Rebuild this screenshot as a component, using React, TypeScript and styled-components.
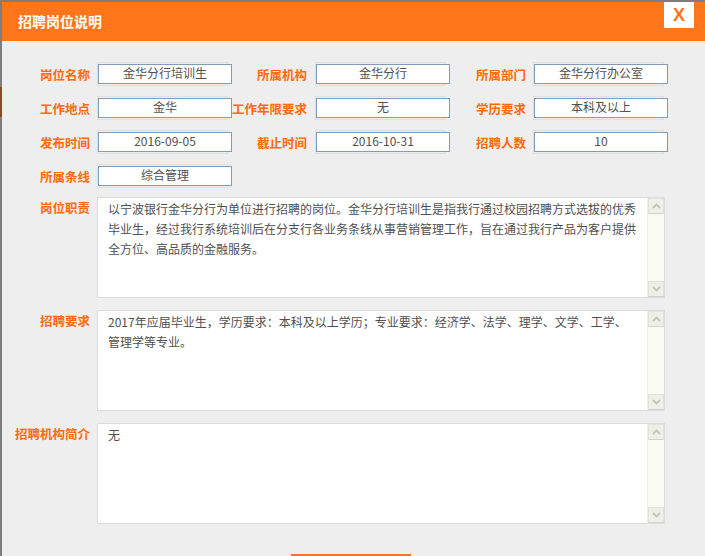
import React from 'react'
import styled, { createGlobalStyle } from 'styled-components'

const GlobalStyle = createGlobalStyle`
  html, body {
    margin: 0;
    padding: 0;
    width: 705px;
    height: 556px;
    overflow: hidden;
    background: linear-gradient(to bottom, #7d7d7d 0 87px, #8e4a1a 87px 117px, #7d7d7d 117px);
    font-family: "Noto Sans CJK SC", "Liberation Sans", sans-serif;
  }
`

const ORANGE = '#ff761a'
const LABEL = '#ff6a0a'

const Dialog = styled.div`
  margin: 2px 0 0 2px;
  width: 703px;
  height: 554px;
  background: #eeeeee;
  overflow: hidden;
  display: flex;
  flex-direction: column;
`

const Header = styled.div`
  height: 39px;
  flex-shrink: 0;
  background: ${ORANGE};
  display: flex;
  justify-content: space-between;
  align-items: flex-start;
`

const Title = styled.h1`
  margin: 0;
  padding-left: 16px;
  font-size: 14px;
  line-height: 38px;
  font-weight: 700;
  color: #ffffff;
`

const CloseBox = styled.button`
  width: 30px;
  height: 26px;
  margin-right: 11px;
  border: none;
  padding: 0;
  background: #ffffff;
  color: ${ORANGE};
  font-family: "Liberation Sans", sans-serif;
  font-size: 18px;
  font-weight: 700;
  line-height: 26px;
  cursor: pointer;
`

const Body = styled.div`
  padding-top: 16px;
  display: flex;
  flex-direction: column;
  flex-shrink: 0;
`

const FieldRow = styled.div`
  height: 34px;
  display: flex;
  align-items: center;
`

const Label = styled.div<{ $w: number; $pr?: number }>`
  width: ${(p) => p.$w}px;
  padding-right: ${(p) => p.$pr ?? 8}px;
  box-sizing: border-box;
  text-align: right;
  white-space: nowrap;
  font-size: 12.5px;
  font-weight: 700;
  color: ${LABEL};
`

const FieldCell = styled.div`
  position: relative;
  z-index: 0;
`

const FieldValue = styled.div`
  position: relative;
  width: 134px;
  height: 20px;
  box-sizing: border-box;
  border: 1px solid #7f9db9;
  background: #ffffff;
  text-align: center;
  font-size: 12px;
  line-height: 16px;
  color: #505050;

  &::before {
    content: '';
    position: absolute;
    left: -2px;
    top: -3px;
    width: 131px;
    height: 24px;
    box-sizing: border-box;
    border: 1px solid #e0e0e0;
    z-index: -1;
  }
`

const AreaList = styled.div`
  margin-top: 4px;
  display: flex;
  flex-direction: column;
  gap: 12px;
`

const AreaRow = styled.div`
  display: flex;
  align-items: flex-start;
`

const AreaLabel = styled(Label)`
  width: 95px;
  padding-right: 7px;
  padding-top: 1px;
`

const AreaBox = styled.div`
  width: 568px;
  height: 101px;
  box-sizing: border-box;
  border: 1px solid #dcdcdc;
  background: #ffffff;
  display: flex;
`

const AreaText = styled.div`
  flex: 1;
  padding: 1px 10px 0 10px;
  font-size: 12px;
  line-height: 20px;
  color: #505050;
`

const ScrollTrack = styled.div`
  width: 16px;
  background: #fbfbf4;
  border-left: 1px solid #f0f0ea;
  display: flex;
  flex-direction: column;
  justify-content: space-between;
`

const ScrollBtn = styled.div`
  height: 16px;
  box-sizing: border-box;
  border: 1px solid #e2e2da;
  border-bottom-color: #d2d2ca;
  background: #efefe8;
  display: flex;
  align-items: center;
  justify-content: center;
`

const Footer = styled.div`
  margin-top: 30px;
  display: flex;
  justify-content: center;
  padding-right: 5px;
`

// only the top edge of this button is inside the window
const SubmitButton = styled.div`
  width: 120px;
  height: 28px;
  background: ${ORANGE};
  cursor: pointer;
`

const Chevron = ({ up }: { up?: boolean }) => (
  <svg width="9" height="6" viewBox="0 0 9 6">
    <path
      d={up ? 'M1 5 L4.5 1.5 L8 5' : 'M1 1 L4.5 4.5 L8 1'}
      fill="none"
      stroke="#c4c4bc"
      strokeWidth="1.8"
    />
  </svg>
)

type Field = { label: string; value: string }

const rows: Field[][] = [
  [
    { label: '岗位名称', value: '金华分行培训生' },
    { label: '所属机构', value: '金华分行' },
    { label: '所属部门', value: '金华分行办公室' },
  ],
  [
    { label: '工作地点', value: '金华' },
    { label: '工作年限要求', value: '无' },
    { label: '学历要求', value: '本科及以上' },
  ],
  [
    { label: '发布时间', value: '2016-09-05' },
    { label: '截止时间', value: '2016-10-31' },
    { label: '招聘人数', value: '10' },
  ],
  [{ label: '所属条线', value: '综合管理' }],
]

// label cell widths per column (they include the gap before the input)
const labelCols = [
  { w: 96, pr: 8 },
  { w: 84, pr: 9 },
  { w: 84, pr: 8 },
]

const areas = [
  {
    label: '岗位职责',
    lines: [
      '以宁波银行金华分行为单位进行招聘的岗位。金华分行培训生是指我行通过校园招聘方式选拔的优秀',
      '毕业生，经过我行系统培训后在分支行各业务条线从事营销管理工作，旨在通过我行产品为客户提供',
      '全方位、高品质的金融服务。',
    ],
  },
  {
    label: '招聘要求',
    lines: [
      '2017年应届毕业生，学历要求：本科及以上学历；专业要求：经济学、法学、理学、文学、工学、',
      '管理学等专业。',
    ],
  },
  { label: '招聘机构简介', lines: ['无'] },
]

const App = () => {
  return (
    <>
      <GlobalStyle />
      <Dialog>
        <Header>
          <Title>招聘岗位说明</Title>
          <CloseBox>X</CloseBox>
        </Header>

        <Body>
          {rows.map((row, i) => (
            <FieldRow key={i}>
              {row.map((f, j) => (
                <React.Fragment key={f.label}>
                  <Label $w={labelCols[j].w} $pr={labelCols[j].pr}>
                    {f.label}
                  </Label>
                  <FieldCell>
                    <FieldValue>{f.value}</FieldValue>
                  </FieldCell>
                </React.Fragment>
              ))}
            </FieldRow>
          ))}

          <AreaList>
            {areas.map((a) => (
              <AreaRow key={a.label}>
                <AreaLabel $w={95}>{a.label}</AreaLabel>
                <AreaBox>
                  <AreaText>
                    {a.lines.map((l, k) => (
                      <div key={k}>{l}</div>
                    ))}
                  </AreaText>
                  <ScrollTrack>
                    <ScrollBtn>
                      <Chevron up />
                    </ScrollBtn>
                    <ScrollBtn>
                      <Chevron />
                    </ScrollBtn>
                  </ScrollTrack>
                </AreaBox>
              </AreaRow>
            ))}
          </AreaList>

          <Footer>
            <SubmitButton role="button" aria-label="确定" />
          </Footer>
        </Body>
      </Dialog>
    </>
  )
}

export default App
